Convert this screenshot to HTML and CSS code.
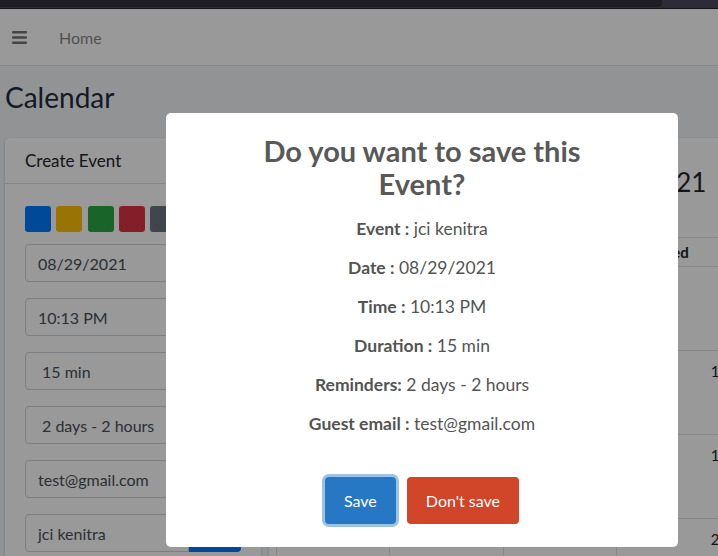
FILE: index.html
```html
<!DOCTYPE html>
<html lang="en">
<head>
<meta charset="utf-8">
<title>Calendar</title>
<link rel="stylesheet" href="styles.css">
</head>
<body>
<div class="chrome"><div class="chrome-tab"></div></div>
<nav class="navbar">
  <span class="bars">
    <svg width="15" height="13" viewBox="0 0 15 13"><rect x="0" y="0" width="15" height="2.6" rx="1"/><rect x="0" y="5.2" width="15" height="2.6" rx="1"/><rect x="0" y="10.4" width="15" height="2.6" rx="1"/></svg>
  </span>
  <a class="nav-link">Home</a>
</nav>
<main class="content">
  <h1 class="page-title">Calendar</h1>
  <div class="row">
    <section class="card left-card">
      <div class="card-header">Create Event</div>
      <div class="card-body">
        <div class="swatches">
          <span class="sw sw-blue"></span><span class="sw sw-yellow"></span><span class="sw sw-green"></span><span class="sw sw-red"></span><span class="sw sw-grey"></span>
        </div>
        <div class="field">08/29/2021</div>
        <div class="field">10:13 PM</div>
        <div class="field select">15 min</div>
        <div class="field select">2 days - 2 hours</div>
        <div class="field">test@gmail.com</div>
        <div class="input-group">
          <div class="field grow">jci kenitra</div>
          <button class="add">Add</button>
        </div>
      </div>
    </section>
    <section class="card cal-card">
      <div class="toolbar"><h2 class="cal-title">August 2021</h2></div>
      <table class="cal">
        <thead><tr><th>Sun</th><th>Mon</th><th>Tue</th><th>Wed</th><th>Thu</th><th>Fri</th><th>Sat</th></tr></thead>
        <tbody>
          <tr><td>1</td><td>2</td><td>3</td><td>4</td><td>5</td><td>6</td><td>7</td></tr>
          <tr><td>8</td><td>9</td><td>10</td><td>11</td><td>12</td><td>13</td><td>14</td></tr>
          <tr><td>15</td><td>16</td><td>17</td><td>18</td><td>19</td><td>20</td><td>21</td></tr>
          <tr><td>22</td><td>23</td><td>24</td><td>25</td><td>26</td><td>27</td><td>28</td></tr>
        </tbody>
      </table>
    </section>
  </div>
</main>
<div class="backdrop">
  <div class="popup" role="dialog">
    <h2 class="swal-title">Do you want to save this<br>Event?</h2>
    <div class="swal-html">
      <p><b>Event :</b> jci kenitra</p>
      <p><b>Date :</b> 08/29/2021</p>
      <p><b>Time :</b> 10:13 PM</p>
      <p><b>Duration :</b> 15 min</p>
      <p><b>Reminders:</b> 2 days - 2 hours</p>
      <p><b>Guest email :</b> test@gmail.com</p>
    </div>
    <div class="actions">
      <button class="btn confirm">Save</button>
      <button class="btn deny">Don't save</button>
    </div>
  </div>
</div>
</body>
</html>
```
FILE: styles.css
```css
* { box-sizing: border-box; }
html, body { margin: 0; padding: 0; }
body {
  width: 718px;
  height: 556px;
  overflow: hidden;
  background: #f4f6f9;
  color: #212529;
  font-family: Lato, "Noto Sans", "Liberation Sans", sans-serif;
  font-size: 16px;
}
.chrome {
  height: 9px;
  background: #2c2b37;
  border-bottom: 1px solid #141319;
}
.chrome-tab {
  width: 662px;
  height: 7px;
  background: #1e1d26;
  border-bottom-right-radius: 4px;
}
.navbar {
  height: 57px;
  background: #fff;
  border-bottom: 1px solid #dee2e6;
  display: flex;
  align-items: center;
  padding-left: 12px;
}
.bars { display: flex; color: rgba(0,0,0,.55); fill: currentColor; margin-top: 1px; }
.nav-link {
  margin-left: 32px;
  color: rgba(0,0,0,.5);
  font-size: 16px;
}
.content { padding: 14px 0 0 5px; }
.page-title {
  margin: 0;
  font-size: 28px;
  font-weight: 400;
  line-height: 34px;
  color: #1f2d3d;
}
.row {
  display: flex;
  gap: 8px;
  margin-top: 24px;
}
.card {
  background: #fff;
  border-radius: 4px;
  box-shadow: 0 0 1px rgba(0,0,0,.125), 0 1px 3px rgba(0,0,0,.2);
}
.left-card { width: 256px; flex: none; height: 480px; }
.card-header {
  height: 46px;
  padding: 0 20px;
  display: flex;
  align-items: center;
  font-size: 17px;
  border-bottom: 1px solid rgba(0,0,0,.125);
  color: #212529;
}
.card-body { padding: 22px 20px 0 20px; }
.swatches { display: flex; gap: 5.3px; margin-bottom: 12px; }
.sw { width: 26px; height: 26px; border-radius: 3px; }
.sw-blue { background: #007bff; }
.sw-yellow { background: #ffc107; }
.sw-green { background: #28a745; }
.sw-red { background: #dc3545; }
.sw-grey { background: #6c757d; }
.field {
  height: 38px;
  border: 1px solid #ced4da;
  border-radius: 4px;
  padding: 0 12px;
  display: flex;
  align-items: center;
  color: #495057;
  font-size: 16px;
  margin-bottom: 16px;
  width: 216px;
}
.field.select { padding-left: 16px; }
.input-group { display: flex; width: 216px; }
.input-group .field { width: auto; flex: 1; border-radius: 4px 0 0 4px; margin: 0; }
.add {
  width: 52px;
  height: 38px;
  border: 0;
  background: #007bff;
  color: #fff;
  border-radius: 0 4px 4px 0;
  font: inherit;
}
.cal-card { width: 860px; flex: none; height: 480px; padding: 0 7px; }
.toolbar { height: 99px; display: flex; align-items: flex-start; }
.cal-title {
  margin: 28px 0 0 283px;
  font-size: 26px;
  font-weight: 400;
  line-height: 32px;
  color: #212529;
}
.cal {
  border-collapse: collapse;
  table-layout: fixed;
  width: 793px;
}
.cal th, .cal td { border: 1px solid #dee2e6; width: 113.3px; }
.cal th {
  height: 29px;
  font-size: 15px;
  font-weight: 700;
  text-align: center;
  padding: 0;
}
.cal td {
  height: 84px;
  vertical-align: top;
  text-align: right;
  padding: 10px 1px 0 0;
  font-size: 15px;
  line-height: 20px;
}
.backdrop {
  position: fixed;
  left: 0; right: 0; bottom: 0; top: 9px;
  background: rgba(0,0,0,.4);
  display: flex;
  align-items: flex-start;
  padding: 104px 0 0 166px;
}
.popup {
  width: 512px;
  height: 434px;
  background: #fff;
  border-radius: 5px;
  padding: 21px 20px 0;
  display: flex;
  flex-direction: column;
  align-items: center;
}
.swal-title {
  margin: 0 0 18px;
  font-size: 29px;
  line-height: 33px;
  font-weight: 700;
  color: #595959;
  text-align: center;
}
.swal-html {
  display: flex;
  flex-direction: column;
  gap: 17px;
  font-size: 17.5px;
  line-height: 22px;
  color: #545454;
  text-align: center;
}
.swal-html p { margin: 0; }
.swal-html b { font-weight: 700; }
.actions { display: flex; gap: 11px; margin-top: 42px; }
.btn {
  height: 47px;
  padding: 0 19px;
  border: 0;
  border-radius: 4px;
  color: #fff;
  font-family: inherit;
  font-size: 16px;
}
.confirm { background: #2778c4; box-shadow: 0 0 0 3px rgba(39,120,196,.45); }
.deny { background: #d14529; }
```
